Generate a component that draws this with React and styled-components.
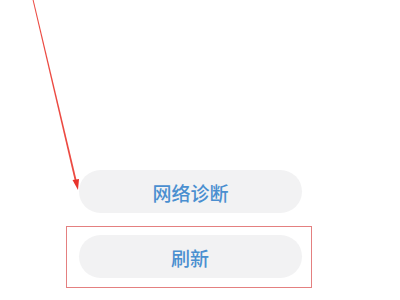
import React from "react";
import styled, { createGlobalStyle } from "styled-components";

const Global = createGlobalStyle`
  html, body { margin: 0; padding: 0; background: #ffffff; }
  body { font-family: "Noto Sans CJK SC", "Noto Sans", sans-serif; }
`;

const Page = styled.div`
  position: relative;
  width: 400px;
  height: 300px;
  overflow: hidden;
  background: #ffffff;
  display: flex;
  flex-direction: column;
  align-items: flex-start;
  padding: 170px 0 0 0;
  box-sizing: border-box;
`;

const PillButton = styled.div`
  width: 223px;
  height: 43px;
  border-radius: 22px;
  background: #f2f2f3;
  color: #4a8fd0;
  font-size: 19px;
  font-weight: 500;
  display: flex;
  align-items: center;
  justify-content: center;
  padding-top: ${(p) => p.$shift || 2}px;
  box-sizing: border-box;
  margin-left: ${(p) => p.$left || 0}px;
`;

const Highlight = styled.div`
  margin: 13px 0 0 66px;
  width: 246px;
  height: 62px;
  box-sizing: border-box;
  border: 1.5px solid #e48080;
  padding: 7.5px 0 0 11.5px;
`;

const ArrowLayer = styled.svg`
  position: absolute;
  left: 0;
  top: 0;
  pointer-events: none;
`;

export default function App() {
  return (
    <>
      <Global />
      <Page>
        <PillButton $left={79}>网络诊断</PillButton>
        <Highlight>
          <PillButton $shift={3}>刷新</PillButton>
        </Highlight>
        <ArrowLayer width="400" height="300" viewBox="0 0 400 300">
          <polygon points="32.6,0 33.6,0 77,182 75.2,182.4" fill="#ec4a42" />
          <polygon points="78,190 72.5,180 79,179" fill="#e8342c" />
        </ArrowLayer>
      </Page>
    </>
  );
}
